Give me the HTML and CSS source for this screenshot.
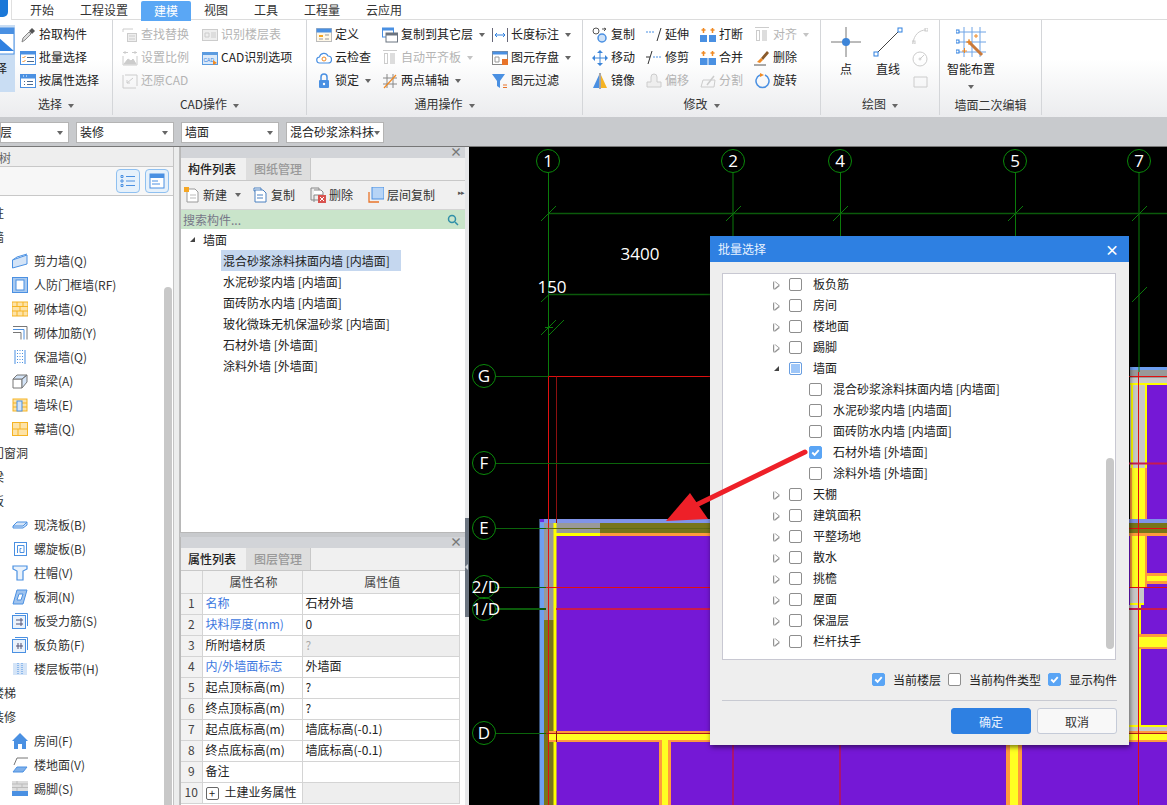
FILE: index.html
```html
<!DOCTYPE html>
<html lang="zh-CN">
<head>
<meta charset="utf-8">
<title>批量选择</title>
<link rel="stylesheet" href="styles.css">
</head>
<body>
<svg class="defs" aria-hidden="true">
  <symbol id="i-pick" viewBox="0 0 16 16"><path d="M2 15l1-4 6-6 2 2-6 6z" fill="#ddd" stroke="#888"/><path d="M9 4l3-3 3 3-3 3z" fill="#555"/></symbol>
  <symbol id="i-batch" viewBox="0 0 16 16"><rect x=".5" y="1.5" width="15" height="13" fill="#fff" stroke="#4a90e2"/><rect x=".5" y="1.5" width="15" height="3" fill="#4a90e2"/><path d="M2.500 7l1 1 2-2M2.500 11l1 1 2-2" fill="none" stroke="#f08a24"/><path d="M7 7.500h7M7 11.500h7" stroke="#4a6a90"/></symbol>
  <symbol id="i-attr" viewBox="0 0 16 16"><rect x=".5" y="1.500" width="15" height="13" fill="#fff" stroke="#4a90e2"/><rect x=".5" y="1.500" width="15" height="4" fill="#4a90e2"/><path d="M3 3h1M6 3h1" stroke="#fff"/><path d="M4 8.500h1M4 11.500h1M7 8.500h6M7 11.500h6" stroke="#4a6a90"/></symbol>
  <symbol id="i-find" viewBox="0 0 16 16" fill="none" stroke="#ccc"><path d="M1 2h10M1 2v3"/><rect x="5.500" y="6.500" width="9" height="8" fill="#eee"/><path d="M7 9h6M7 12h6"/></symbol>
  <symbol id="i-floor" viewBox="0 0 16 16" fill="none" stroke="#ccc"><rect x=".5" y="2.500" width="15" height="11" fill="#eee"/><path d="M3 6h4v4H3zM9 6h5M9 8h5M9 10h5"/></symbol>
  <symbol id="i-scale" viewBox="0 0 16 16" fill="none" stroke="#ccc"><path d="M1 6v9h14V6"/><path d="M2 14l4-5 3 2 2-2 3 5z" fill="#ccc"/><path d="M3 1v3M13 1v3M1 2.500h5M10 2.500h5"/></symbol>
  <symbol id="i-cadopt" viewBox="0 0 16 16"><rect x=".5" y="2.500" width="15" height="12" fill="#dbe9f8" stroke="#5b9be0"/><rect x="1" y="3" width="14" height="2" fill="#5b9be0"/><text x="1.500" y="11.500" class="tiny">CAD</text><path d="M11 10l4 3-4 2z" fill="#f08a24"/></symbol>
  <symbol id="i-restore" viewBox="0 0 16 16" fill="none" stroke="#ccc"><path d="M1 2v13h13M3 2h12v11"/><path d="M11 5L5 10M5 7v3h3"/></symbol>
  <symbol id="i-def" viewBox="0 0 16 16"><rect x=".5" y="1.500" width="15" height="13" fill="#fff8e8" stroke="#bbb"/><rect x=".5" y="1.500" width="15" height="4" fill="#4a90e2"/><path d="M3 8h4v2H3z" fill="#f5a623"/><path d="M9 8h4M3 12h4M9 12h4" stroke="#999"/></symbol>
  <symbol id="i-cloud" viewBox="0 0 16 16"><path d="M4 13a3 3 0 0 1-.5-6 4.500 4.500 0 0 1 8.500-1 3.500 3.500 0 0 1 0 7z" fill="#fff" stroke="#4a90e2" stroke-width="1.200"/><circle cx="8" cy="9" r="2" fill="none" stroke="#f08a24"/></symbol>
  <symbol id="i-lock" viewBox="0 0 16 16"><path d="M5 7V4a3 3 0 0 1 6 0v3" fill="none" stroke="#4a90e2" stroke-width="1.500"/><rect x="3" y="7" width="10" height="8" rx="1" fill="#4a90e2"/><circle cx="8" cy="11" r="1.200" fill="#fff"/></symbol>
  <symbol id="i-copyf" viewBox="0 0 16 16"><rect x=".5" y="1" width="11" height="9" fill="#fff" stroke="#4a90e2"/><rect x=".5" y="1" width="11" height="2.500" fill="#4a90e2"/><rect x="4" y="6" width="11.500" height="9" fill="#fff" stroke="#6b7480"/><rect x="4" y="6" width="11.500" height="2.500" fill="#6b7480"/></symbol>
  <symbol id="i-align" viewBox="0 0 16 16"><path d="M1 .5h14" stroke="#ccc"/><rect x="2.500" y="3.500" width="3" height="10" fill="none" stroke="#ccc"/><rect x="8" y="3" width="5" height="11" fill="#ddd"/></symbol>
  <symbol id="i-axis" viewBox="0 0 16 16" fill="none"><path d="M1 5h14M1 11h14M5 1v14M11 1v14" stroke="#888"/><path d="M2 15L14 2" stroke="#f08a24" stroke-width="1.200"/></symbol>
  <symbol id="i-dim" viewBox="0 0 16 16" fill="none" stroke="#667"><path d="M.5 1v14M15.500 1v14"/><path d="M3 8h10" stroke="#2f80e0"/><path d="M5 6L3 8l2 2M11 6l2 2-2 2" stroke="#2f80e0"/></symbol>
  <symbol id="i-save" viewBox="0 0 16 16"><rect x=".5" y="1.500" width="15" height="13" fill="#fff" stroke="#888"/><rect x=".5" y="1.500" width="15" height="3" fill="#4a90e2"/><path d="M3 7h4v5H3z" fill="none" stroke="#999"/><rect x="10" y="9" width="6" height="6" fill="#e8742a"/></symbol>
  <symbol id="i-filter" viewBox="0 0 16 16"><path d="M0 1h13L8 8v7L5 13V8z" fill="#4a90e2"/><path d="M11 12h4M11 14.500h4" stroke="#e8742a"/></symbol>
  <symbol id="i-copy" viewBox="0 0 16 16" fill="none"><circle cx="4" cy="4" r="3" stroke="#555"/><circle cx="10" cy="11" r="4" stroke="#4a90e2" stroke-width="1.500" fill="#cfe2f8"/><path d="M10 2h4M12 1l2 1-2 2" stroke="#555"/></symbol>
  <symbol id="i-move" viewBox="0 0 16 16" fill="#3d85d8"><path d="M8 0l3 3H5zM8 16l-3-3h6zM0 8l3-3v6zM16 8l-3 3V5z"/><path d="M8 3v10M3 8h10" stroke="#3d85d8"/></symbol>
  <symbol id="i-mirror" viewBox="0 0 16 16"><path d="M7 2L1 15h6z" fill="#4a90e2"/><path d="M9 2l6 13H9z" fill="#f5b323"/><path d="M8 0v16" stroke="#555"/></symbol>
  <symbol id="i-extend" viewBox="0 0 16 16" fill="none"><path d="M0 5h9" stroke="#4a90e2" stroke-dasharray="2 1"/><path d="M11 14l4-13" stroke="#333"/></symbol>
  <symbol id="i-trim" viewBox="0 0 16 16" fill="none"><path d="M0 7h4" stroke="#333"/><path d="M7 7h9" stroke="#4a90e2" stroke-dasharray="2 1"/><path d="M2 14L6 1" stroke="#333"/></symbol>
  <symbol id="i-offset" viewBox="0 0 16 16" fill="#eee" stroke="#ccc"><path d="M5 9V4a3 3 0 0 1 6 0v5h4v5H1V9z"/></symbol>
  <symbol id="i-break" viewBox="0 0 16 16"><rect x="0" y="8" width="7" height="7" fill="#4a90e2"/><rect x="9" y="8" width="7" height="7" fill="#4a90e2"/><path d="M3.500 1v5M1.500 3h4M12.500 1v5M10.500 3h4" stroke="#f08a24" stroke-width="1.500"/></symbol>
  <symbol id="i-merge" viewBox="0 0 16 16"><rect x="0" y="8" width="16" height="7" fill="#4a90e2"/><path d="M8 8v7" stroke="#fff"/><path d="M3.500 1v5M1.500 3h4M12.500 1v5M10.500 3h4" stroke="#f08a24" stroke-width="1.500"/></symbol>
  <symbol id="i-split" viewBox="0 0 16 16" fill="none" stroke="#ccc"><path d="M1 14h13l1-7H3z"/><path d="M7 12l7-9" stroke-width="1.500"/></symbol>
  <symbol id="i-brush" viewBox="0 0 16 16"><path d="M7 8l6-7 2 2-6 7z" fill="#8a5a2b"/><path d="M7 8l2 2-3 3-3-1z" fill="#f08a24"/><path d="M0 15h12" stroke="#555"/></symbol>
  <symbol id="i-rotate" viewBox="0 0 16 16" fill="none"><path d="M6 2a6.500 6.500 0 1 0 5 0" stroke="#4a90e2" stroke-width="1.500"/><path d="M6 0l4 2-4 2z" fill="#f08a24"/></symbol>
  <symbol id="w-shear" viewBox="0 0 16 16"><path d="M.5 7L15 2v9L.5 15z" fill="#d4e4f7" stroke="#4a90e2"/><path d="M.5 7L5 4l10-3" fill="none" stroke="#4a90e2"/></symbol>
  <symbol id="w-door" viewBox="0 0 16 16"><rect x=".5" y=".5" width="15" height="15" fill="#a9caf0" stroke="#4a90e2"/><rect x="4" y="3" width="8" height="10" fill="#fff" stroke="#4a90e2"/></symbol>
  <symbol id="w-brick" viewBox="0 0 16 16"><rect width="16" height="14" y="1" fill="#fde3a8" stroke="#f5b323"/><path d="M0 5.500h16M0 10h16M5 1v4.500M11 1v4.500M8 5.500V10M5 10v5M11 10v5" stroke="#f5b323"/></symbol>
  <symbol id="w-rebar" viewBox="0 0 16 16" fill="none" stroke="#777"><path d="M1 1.500h14v13"/><path d="M1 4.500h11v10" stroke="#4a90e2"/><path d="M1 7.500h8v7"/></symbol>
  <symbol id="w-ins" viewBox="0 0 16 16" fill="none"><path d="M3 1v14M13 1v14" stroke="#4a90e2"/><path d="M8 1v14M5.500 1v14M10.500 1v14" stroke="#4a90e2" stroke-dasharray="1 2"/></symbol>
  <symbol id="w-beam" viewBox="0 0 16 16"><path d="M1 6h9v9H1z" fill="#fff" stroke="#777"/><path d="M1 6l4-4h10l-5 4zM10 6l5-4v7l-5 6z" fill="#d4e4f7" stroke="#777"/></symbol>
  <symbol id="w-pier" viewBox="0 0 16 16"><rect y="2" width="14" height="12" x="1" fill="#fde3a8" stroke="#f5b323"/><path d="M1 6h14M1 10h14" stroke="#f5b323"/><rect x="5" y="4" width="5" height="10" fill="#d4e4f7" stroke="#4a90e2"/></symbol>
  <symbol id="w-curtain" viewBox="0 0 16 16"><rect x=".5" y="1.500" width="15" height="13" fill="#fde3a8" stroke="#f5b323"/><path d="M0 8h16M8 1v7M6 8v7" stroke="#f5b323"/></symbol>
  <symbol id="w-slab" viewBox="0 0 16 16"><path d="M1 9l4-4h10v3l-4 3H1z" fill="#d4e4f7" stroke="#4a90e2"/><path d="M1 9h10l4-4" fill="none" stroke="#4a90e2"/></symbol>
  <symbol id="w-spiral" viewBox="0 0 16 16" fill="none" stroke="#4a90e2"><rect x="2.500" y="1.500" width="12" height="13"/><path d="M5.500 12V4.500h6.500v7H8V7.500h1.500"/></symbol>
  <symbol id="w-cap" viewBox="0 0 16 16" fill="none" stroke="#4a90e2" stroke-width="1.200"><path d="M1 1h14v3l-4 2v9H5V6L1 4z" fill="#eaf2fb"/></symbol>
  <symbol id="w-hole" viewBox="0 0 16 16"><path d="M1 15L5 1h10l-4 14z" fill="#9fc3ee" stroke="#4a90e2"/><path d="M5 11l2-6h4l-2 6z" fill="#fff" stroke="#4a90e2"/></symbol>
  <symbol id="w-rb" viewBox="0 0 16 16" fill="none" stroke="#4a90e2"><rect x=".5" y="2.500" width="13" height="13" fill="#eaf2fb"/><path d="M3 .5h12.500V13"/><path d="M4 7h7M4 11h7M9 5v8" stroke="#557"/></symbol>
  <symbol id="w-rn" viewBox="0 0 16 16" fill="none" stroke="#4a90e2"><rect x=".5" y="2.500" width="13" height="13" fill="#eaf2fb"/><path d="M3 .5h12.500V13"/><path d="M4 9h7M6 6v6M9 6v6" stroke="#557"/></symbol>
  <symbol id="w-band" viewBox="0 0 16 16"><rect x="1" y="2" width="14" height="12" fill="#d4e4f7"/><path d="M6 2v12M10 2v12" stroke="#4a90e2" stroke-dasharray="1 1"/></symbol>
  <symbol id="w-room" viewBox="0 0 16 16"><path d="M8 0L0 8h2v8h4v-5h4v5h4V8h2z" fill="#4a90e2"/></symbol>
  <symbol id="w-floor" viewBox="0 0 16 16"><path d="M1 15l4-5h10l-4 5z" fill="#7fb0ea" stroke="#4a90e2"/><path d="M2 8L5 1h11" fill="none" stroke="#777"/></symbol>
  <symbol id="w-skirt" viewBox="0 0 16 16"><rect width="16" height="10" fill="#ddd"/><path d="M0 3h16M0 6.500h16M5 0v3M10 3v3.500M5 6.500V10" stroke="#bbb"/><rect y="10" width="16" height="5" fill="#4a90e2"/></symbol>
  <symbol id="t-list" viewBox="0 0 16 16" fill="none" stroke="#4a90e2"><path d="M1 2.500h2v2H1zM1 7h2v2H1zM1 11.500h2v2H1zM6 3.500h9M6 8h9M6 12.500h9"/></symbol>
  <symbol id="t-form" viewBox="0 0 16 16"><rect x="1" y="1" width="14" height="14" fill="#fff" stroke="#4a90e2"/><rect x="1" y="1" width="14" height="4" fill="#4a90e2"/><path d="M3 8h6M3 11h8" stroke="#4a90e2"/></symbol>
  <symbol id="m-new" viewBox="0 0 16 16"><path d="M3 2h8l3 3v10H3z" fill="#fff" stroke="#999"/><rect x="0" y="0" width="5" height="5" fill="#f5a623"/><path d="M6 8h6M6 11h6" stroke="#bbb"/></symbol>
  <symbol id="m-copy" viewBox="0 0 16 16" fill="#fff" stroke="#4a80c0"><path d="M2 1h7v3H2z"/><path d="M3 3h8l3 3v9H3z"/><path d="M5 8h6M5 11h6"/></symbol>
  <symbol id="m-del" viewBox="0 0 16 16"><path d="M1 1h8v12H1z" fill="#eee" stroke="#888"/><path d="M4 3h7l2 2v3H4v7" fill="#fff" stroke="#888"/><rect x="8" y="8" width="8" height="8" fill="#d9534f"/><path d="M10 10l4 4M14 10l-4 4" stroke="#fff"/></symbol>
  <symbol id="m-floor" viewBox="0 0 16 16"><path d="M1 5v10h10" fill="none" stroke="#e8742a" stroke-width="1.300"/><rect x="4" y="0" width="12" height="12" fill="#b6d4f6" stroke="#4a90e2"/></symbol>
  <symbol id="m-search" viewBox="0 0 12 12" fill="none" stroke="#2f8fa8" stroke-width="1.500"><circle cx="5" cy="5" r="3.500"/><path d="M8 8l3 3"/></symbol>
  <symbol id="c-check" viewBox="0 0 14 14"><path d="M3.500 7l2.500 2.500L10.500 4.500" fill="none" stroke="#fff" stroke-width="2"/></symbol>
</svg>

<header class="tabbar">
  <div class="logo"></div>
  <nav class="tabs">
    <span class="tab t30">开始</span>
    <span class="tab t80">工程设置</span>
    <span class="tab active">建模</span>
    <span class="tab t204">视图</span>
    <span class="tab t254">工具</span>
    <span class="tab t304">工程量</span>
    <span class="tab t366">云应用</span>
  </nav>
</header>

<section class="ribbon">
  <div class="group g1">
    <div class="group-body">
      <div class="bigsel"><svg class="bigsel-icon" viewBox="0 0 15 30"><rect x="-10" y="1" width="24" height="26" fill="#fff" stroke="#4a90e2"/><rect x="-10" y="1" width="24" height="6" fill="#4a90e2"/><path d="M-2 10L14 24H-2z" fill="#2f80e0"/></svg><span class="bigsel-t">择</span></div>
      <div class="col c1">
        <div class="it"><svg><use href="#i-pick"/></svg>拾取构件</div>
        <div class="it"><svg><use href="#i-batch"/></svg>批量选择</div>
        <div class="it"><svg><use href="#i-attr"/></svg>按属性选择</div>
      </div>
    </div>
    <div class="glabel">选择<i class="caret"></i></div>
  </div>
  <div class="group g2">
    <div class="group-body">
      <div class="col w80">
        <div class="it off"><svg><use href="#i-find"/></svg>查找替换</div>
        <div class="it off"><svg><use href="#i-scale"/></svg>设置比例</div>
        <div class="it off"><svg><use href="#i-restore"/></svg>还原CAD</div>
      </div>
      <div class="col">
        <div class="it off"><svg><use href="#i-floor"/></svg>识别楼层表</div>
        <div class="it"><svg><use href="#i-cadopt"/></svg>CAD识别选项</div>
      </div>
    </div>
    <div class="glabel">CAD操作<i class="caret"></i></div>
  </div>
  <div class="group g3">
    <div class="group-body">
      <div class="col w66">
        <div class="it"><svg><use href="#i-def"/></svg>定义</div>
        <div class="it"><svg><use href="#i-cloud"/></svg>云检查</div>
        <div class="it"><svg><use href="#i-lock"/></svg>锁定<i class="caret"></i></div>
      </div>
      <div class="col w110">
        <div class="it"><svg><use href="#i-copyf"/></svg>复制到其它层<i class="caret"></i></div>
        <div class="it off"><svg><use href="#i-align"/></svg>自动平齐板<i class="caret lite"></i></div>
        <div class="it"><svg><use href="#i-axis"/></svg>两点辅轴<i class="caret"></i></div>
      </div>
      <div class="col">
        <div class="it"><svg><use href="#i-dim"/></svg>长度标注<i class="caret"></i></div>
        <div class="it"><svg><use href="#i-save"/></svg>图元存盘<i class="caret"></i></div>
        <div class="it"><svg><use href="#i-filter"/></svg>图元过滤</div>
      </div>
    </div>
    <div class="glabel">通用操作<i class="caret"></i></div>
  </div>
  <div class="group g4">
    <div class="group-body">
      <div class="col w54">
        <div class="it"><svg><use href="#i-copy"/></svg>复制</div>
        <div class="it"><svg><use href="#i-move"/></svg>移动</div>
        <div class="it"><svg><use href="#i-mirror"/></svg>镜像</div>
      </div>
      <div class="col w54">
        <div class="it"><svg><use href="#i-extend"/></svg>延伸</div>
        <div class="it"><svg><use href="#i-trim"/></svg>修剪</div>
        <div class="it off"><svg><use href="#i-offset"/></svg>偏移</div>
      </div>
      <div class="col w54">
        <div class="it"><svg><use href="#i-break"/></svg>打断</div>
        <div class="it"><svg><use href="#i-merge"/></svg>合并</div>
        <div class="it off"><svg><use href="#i-split"/></svg>分割</div>
      </div>
      <div class="col">
        <div class="it off"><svg><use href="#i-align"/></svg>对齐<i class="caret lite"></i></div>
        <div class="it"><svg><use href="#i-brush"/></svg>删除</div>
        <div class="it"><svg><use href="#i-rotate"/></svg>旋转</div>
      </div>
    </div>
    <div class="glabel">修改<i class="caret"></i></div>
  </div>
  <div class="group g5">
    <div class="group-body">
      <div class="big w-pt">
        <svg class="big-i" viewBox="0 0 30 30"><path d="M0 15h30M15 0v30" stroke="#777"/><circle cx="15" cy="15" r="4" fill="#3d85d8"/></svg>
        <span>点</span>
      </div>
      <div class="big w-ln">
        <svg class="big-i" viewBox="0 0 30 30"><path d="M3 27L27 3" stroke="#444"/><rect x="1" y="25" width="4" height="4" fill="#fff" stroke="#2f80e0"/><rect x="25" y="1" width="4" height="4" fill="#fff" stroke="#2f80e0"/></svg>
        <span>直线</span>
      </div>
      <div class="mini">
        <svg viewBox="0 0 16 16" fill="none" stroke="#ccc"><path d="M1 15C2 7 7 2 14 2"/><rect x="13" y="0" width="3" height="3"/><rect x="0" y="13" width="3" height="3"/></svg>
        <svg viewBox="0 0 16 16" fill="none" stroke="#ccc"><circle cx="8" cy="8" r="7"/><path d="M8 8l4-4"/><circle cx="8" cy="8" r="1"/></svg>
        <svg viewBox="0 0 16 16" fill="none" stroke="#ccc"><path d="M2 3h13v10H2z"/></svg>
      </div>
    </div>
    <div class="glabel">绘图<i class="caret"></i></div>
  </div>
  <div class="group g6">
    <div class="group-body">
      <div class="big w-sm">
        <svg class="big-i" viewBox="0 0 30 30" fill="none"><path d="M0 5h30M0 15h30M0 25h30M8 0v30M16 0v30M24 0v30" stroke="#6ea4e6"/><rect x="0" y="3" width="3" height="3" fill="#fff" stroke="#2f80e0"/><rect x="0" y="13" width="3" height="3" fill="#fff" stroke="#2f80e0"/><rect x="0" y="23" width="3" height="3" fill="#fff" stroke="#2f80e0"/><path d="M12 14l14 14" stroke="#c9793a" stroke-width="3"/><path d="M10 15h6M13 12v6M18 9h4M20 7v4M6 24h5M8.500 21v5" stroke="#f08a24"/></svg>
        <span>智能布置</span>
        <i class="caret solo"></i>
      </div>
    </div>
    <div class="glabel g6l">墙面二次编辑</div>
  </div>
</section>

<section class="selbar">
  <div class="sel s0"><span class="clip0">楼层</span><i class="caret"></i></div>
  <div class="sel"><span>装修</span><i class="caret"></i></div>
  <div class="sel"><span>墙面</span><i class="caret"></i></div>
  <div class="sel"><span>混合砂浆涂料抹</span><i class="caret"></i></div>
</section>

<main class="main">
  <aside class="navpanel">
    <div class="navhead"><span class="clip8">导航树</span></div>
    <div class="navtools">
      <span class="tbtn"><svg><use href="#t-list"/></svg></span>
      <span class="tbtn"><svg><use href="#t-form"/></svg></span>
    </div>
    <div class="navtree">
      <div class="scroll-nav"></div>
      <div class="n top">柱</div>
      <div class="n top">墙</div>
      <div class="n"><svg><use href="#w-shear"/></svg>剪力墙(Q)</div>
      <div class="n"><svg><use href="#w-door"/></svg>人防门框墙(RF)</div>
      <div class="n"><svg><use href="#w-brick"/></svg>砌体墙(Q)</div>
      <div class="n"><svg><use href="#w-rebar"/></svg>砌体加筋(Y)</div>
      <div class="n"><svg><use href="#w-ins"/></svg>保温墙(Q)</div>
      <div class="n"><svg><use href="#w-beam"/></svg>暗梁(A)</div>
      <div class="n"><svg><use href="#w-pier"/></svg>墙垛(E)</div>
      <div class="n"><svg><use href="#w-curtain"/></svg>幕墙(Q)</div>
      <div class="n top">门窗洞</div>
      <div class="n top">梁</div>
      <div class="n top">板</div>
      <div class="n"><svg><use href="#w-slab"/></svg>现浇板(B)</div>
      <div class="n"><svg><use href="#w-spiral"/></svg>螺旋板(B)</div>
      <div class="n"><svg><use href="#w-cap"/></svg>柱帽(V)</div>
      <div class="n"><svg><use href="#w-hole"/></svg>板洞(N)</div>
      <div class="n"><svg><use href="#w-rb"/></svg>板受力筋(S)</div>
      <div class="n"><svg><use href="#w-rn"/></svg>板负筋(F)</div>
      <div class="n"><svg><use href="#w-band"/></svg>楼层板带(H)</div>
      <div class="n top">楼梯</div>
      <div class="n top">装修</div>
      <div class="n"><svg><use href="#w-room"/></svg>房间(F)</div>
      <div class="n"><svg><use href="#w-floor"/></svg>楼地面(V)</div>
      <div class="n"><svg><use href="#w-skirt"/></svg>踢脚(S)</div>
    </div>
  </aside>

  <div class="midcol">
    <section class="pane pane-top">
      <div class="panehead">×</div>
      <div class="panetabs"><span class="ptab on">构件列表</span><span class="ptab">图纸管理</span></div>
      <div class="ptools">
        <span class="pt w-new"><svg><use href="#m-new"/></svg>新建<i class="caret"></i></span>
        <span class="pt w-cp"><svg><use href="#m-copy"/></svg>复制</span>
        <span class="pt w-dl"><svg><use href="#m-del"/></svg>删除</span>
        <span class="pt"><svg><use href="#m-floor"/></svg>层间复制</span>
        <span class="more">▸▸</span>
      </div>
      <div class="psearch"><span>搜索构件...</span><svg><use href="#m-search"/></svg></div>
      <div class="plist">
        <div class="li-root"><i class="tri-open"></i>墙面</div>
        <div class="li sel-li">混合砂浆涂料抹面内墙 [内墙面]</div>
        <div class="li">水泥砂浆内墙 [内墙面]</div>
        <div class="li">面砖防水内墙 [内墙面]</div>
        <div class="li">玻化微珠无机保温砂浆 [内墙面]</div>
        <div class="li">石材外墙 [外墙面]</div>
        <div class="li">涂料外墙 [外墙面]</div>
      </div>
    </section>
    <section class="pane pane-bot">
      <div class="panehead">×</div>
      <div class="panetabs"><span class="ptab on">属性列表</span><span class="ptab">图层管理</span></div>
      <table class="props">
        <thead><tr><th class="cn"></th><th class="ck">属性名称</th><th class="cv">属性值</th></tr></thead>
        <tbody>
          <tr><td class="cn">1</td><td class="blue">名称</td><td>石材外墙</td></tr>
          <tr><td class="cn">2</td><td class="blue">块料厚度(mm)</td><td>0</td></tr>
          <tr><td class="cn">3</td><td>所附墙材质</td><td class="gray q">?</td></tr>
          <tr><td class="cn">4</td><td class="blue">内/外墙面标志</td><td>外墙面</td></tr>
          <tr><td class="cn">5</td><td>起点顶标高(m)</td><td>?</td></tr>
          <tr><td class="cn">6</td><td>终点顶标高(m)</td><td>?</td></tr>
          <tr><td class="cn">7</td><td>起点底标高(m)</td><td>墙底标高(-0.1)</td></tr>
          <tr><td class="cn">8</td><td>终点底标高(m)</td><td>墙底标高(-0.1)</td></tr>
          <tr><td class="cn">9</td><td>备注</td><td></td></tr>
          <tr><td class="cn">10</td><td><i class="plus">+</i>土建业务属性</td><td class="gray"></td></tr>
        </tbody>
      </table>
    </section>
  </div>

  <div class="splitter"><div class="handle"></div></div>

  <div class="canvas">
    <svg class="cad" viewBox="469 147 698 658">
      <rect x="469" y="147" width="698" height="658" fill="#000"/>
      <rect x="556" y="536" width="611" height="269" fill="#7518d6"/>
      <rect x="1130" y="370" width="37" height="8" fill="#999"/>
      <rect x="1130" y="378" width="17" height="90" fill="#c8c8c8"/>
      <path d="M1132 378v90M1146 378v90" stroke="#ff0" stroke-width="2"/>
      <rect x="1130" y="378" width="37" height="5" fill="#c8c8c8"/>
      <rect x="1130" y="383" width="37" height="2" fill="#ff0"/>
      <rect x="1147" y="385" width="20" height="190" fill="#7518d6"/>
      <rect x="1130" y="468" width="17" height="119" fill="#ff9a3c"/>
      <rect x="1132" y="468" width="13" height="119" fill="#ff2"/>
      <rect x="1147" y="573" width="20" height="11" fill="#ff9a3c"/>
      <rect x="1147" y="576" width="20" height="5" fill="#ff2"/>
      <rect x="1130" y="587" width="14" height="18" fill="#c8c8c8"/>
      <rect x="1130" y="603" width="14" height="2" fill="#ff0"/>
      <rect x="1129" y="605" width="10" height="120" fill="#c8c8c8"/>
      <rect x="1139" y="605" width="2" height="120" fill="#ff0"/>
      <rect x="1139" y="634" width="28" height="15" fill="#ff9a3c"/>
      <rect x="1139" y="637" width="28" height="10" fill="#ff2"/>
      <rect x="1129" y="725" width="38" height="16" fill="#c8c8c8"/>
      <rect x="1129" y="725" width="38" height="2" fill="#ff0"/>
      <rect x="1129" y="739" width="38" height="2" fill="#ff0"/>
      <rect x="1130" y="367" width="37" height="3" fill="#6e9ff0"/>
      <rect x="548" y="523" width="52" height="10" fill="#999"/>
      <rect x="600" y="523" width="567" height="10" fill="#77751a"/>
      <rect x="548" y="533" width="52" height="3" fill="#ff0"/>
      <rect x="600" y="533" width="567" height="3" fill="#ff9a3c"/>
      <rect x="544" y="523" width="10" height="97" fill="#999"/>
      <rect x="544" y="620" width="10" height="185" fill="#77751a"/>
      <rect x="553.500" y="523" width="3" height="282" fill="#ff0"/>
      <rect x="539.500" y="519" width="4.500" height="286" fill="#6e9ff0"/>
      <rect x="540" y="519" width="627" height="4" fill="#8094e8"/>
      <rect x="540" y="519" width="4" height="3" fill="#6a2ae0"/>
      <rect x="548" y="731" width="619" height="11" fill="#ff9a3c"/>
      <rect x="548" y="733" width="619" height="7" fill="#ff2"/>
      <rect x="659" y="742" width="12" height="63" fill="#ff9a3c"/>
      <rect x="662" y="737" width="6" height="68" fill="#ff2"/>
      <rect x="1006" y="742" width="16" height="63" fill="#ff9a3c"/>
      <rect x="1010" y="737" width="8" height="68" fill="#ff2"/>
      <g stroke="#e01010" fill="none">
        <path d="M548.500 376.500H1167M548.500 376.500V805"/>
        <path d="M733 742V805M840 742V805M1138.500 372V805"/>
        <path d="M1129 528.500H1167M540 587.500H1167"/>
        <path d="M544 733.500H1167" stroke="#b01818"/>
        <path d="M556.500 376.500V523M556.500 731V742" stroke="#8c1010"/>
        <path d="M556 609H1167M1129 463.500H1167" stroke="#c81a50" stroke-width="2"/>
      </g>
      <path d="M544 528.500H710" stroke="#5f6a12"/>
      <g stroke="#0a7a0a" fill="none">
        <path d="M548.500 173V376M733 173V236M840.500 173V236M1015.500 173V236M1139 173V372"/>
        <path d="M496 376.500H548M496 463.500H710M496 528.500H546M496 587.500H546M496 733.500H546" stroke="#0b640b"/>
        <path d="M548 213.500H1167M548 294.500H710" stroke="#0b5a0b" stroke-width="1.500"/>
        <path d="M496 609H546" stroke="#0b5a0b" stroke-width="2"/>
        <path d="M541 221L556 206M541 302L549 294.500M541 335L556 320M549 335L564 320M545 327.500H553"/>
        <path d="M726 221L741 206M833 221L848 206M1008 221L1023 206M1132 221L1147 206M1132 302L1147 287"/>
        <g stroke="#0a8a0a">
          <circle cx="548" cy="161" r="11.500"/><circle cx="733" cy="161" r="11.500"/><circle cx="840" cy="161" r="11.500"/><circle cx="1015" cy="161" r="11.500"/><circle cx="1139" cy="161" r="11.500"/>
          <circle cx="484" cy="376" r="11.500"/><circle cx="484" cy="463" r="11.500"/><circle cx="484" cy="528" r="11.500"/><circle cx="484" cy="587" r="11.500"/><circle cx="484" cy="609" r="11.500"/><circle cx="484" cy="733" r="11.500"/>
        </g>
      </g>
      <g class="cadt">
        <text x="548" y="167">1</text><text x="733" y="167">2</text><text x="840" y="167">4</text><text x="1015" y="167">5</text><text x="1139" y="167">7</text>
        <text x="484" y="382">G</text><text x="484" y="469">F</text><text x="484" y="534">E</text><text x="486" y="593">2/D</text><text x="486" y="615">1/D</text><text x="484" y="739">D</text>
        <text x="640" y="260">3400</text><text x="552" y="293">150</text>
      </g>
    </svg>

    <div class="dialog">
      <div class="dtitle"><span>批量选择</span><b class="dclose">×</b></div>
      <div class="dtree">
        <div class="dscroll"></div>
        <div class="r p"><i class="tri"></i><i class="cb"></i>板负筋</div>
        <div class="r p"><i class="tri"></i><i class="cb"></i>房间</div>
        <div class="r p"><i class="tri"></i><i class="cb"></i>楼地面</div>
        <div class="r p"><i class="tri"></i><i class="cb"></i>踢脚</div>
        <div class="r p"><i class="tri-down"></i><i class="cb part"></i>墙面</div>
        <div class="r c"><i class="cb"></i>混合砂浆涂料抹面内墙 [内墙面]</div>
        <div class="r c"><i class="cb"></i>水泥砂浆内墙 [内墙面]</div>
        <div class="r c"><i class="cb"></i>面砖防水内墙 [内墙面]</div>
        <div class="r c"><i class="cb on"><svg><use href="#c-check"/></svg></i>石材外墙 [外墙面]</div>
        <div class="r c"><i class="cb"></i>涂料外墙 [外墙面]</div>
        <div class="r p"><i class="tri"></i><i class="cb"></i>天棚</div>
        <div class="r p"><i class="tri"></i><i class="cb"></i>建筑面积</div>
        <div class="r p"><i class="tri"></i><i class="cb"></i>平整场地</div>
        <div class="r p"><i class="tri"></i><i class="cb"></i>散水</div>
        <div class="r p"><i class="tri"></i><i class="cb"></i>挑檐</div>
        <div class="r p"><i class="tri"></i><i class="cb"></i>屋面</div>
        <div class="r p"><i class="tri"></i><i class="cb"></i>保温层</div>
        <div class="r p"><i class="tri"></i><i class="cb"></i>栏杆扶手</div>
      </div>
      <div class="dopts">
        <span class="opt"><i class="cb on"><svg><use href="#c-check"/></svg></i>当前楼层</span>
        <span class="opt"><i class="cb"></i>当前构件类型</span>
        <span class="opt"><i class="cb on"><svg><use href="#c-check"/></svg></i>显示构件</span>
      </div>
      <div class="dbtns">
        <button class="btn primary" type="button">确定</button>
        <button class="btn" type="button">取消</button>
      </div>
    </div>

    <svg class="arrow" viewBox="469 147 698 658">
      <path d="M805 452L690 508" stroke="#ee2028" stroke-width="5" stroke-linecap="round"/>
      <path d="M666 521L690 493L708 519z" fill="#ee2028"/>
    </svg>
  </div>
</main>
</body>
</html>
```

FILE: styles.css
```css
* { box-sizing: border-box; }
html, body { margin: 0; padding: 0; width: 1167px; height: 805px; overflow: hidden; }
body { font: 12px/1.2 "Noto Sans CJK SC", "Liberation Sans", sans-serif; color: #222; background: #fff; }
.defs { position: absolute; width: 0; height: 0; overflow: hidden; }
.tiny { font: 5px "Liberation Sans", sans-serif; fill: #2f80e0; }
i { font-style: normal; }

/* tab bar */
.tabbar { height: 20px; background: #fff; border-bottom: 1px solid #dcdcdc; display: flex; }
.logo { width: 12px; height: 20px; background: #fff; border-right: 1px solid #e0e0e0; position: relative; overflow: hidden; }
.logo::before { content: ""; display: block; width: 10px; height: 17px; border-radius: 0 0 5px 0; background: #1b78d8; margin-left: -2px; }
.tabs { display: flex; flex: 1; }
.tab { height: 20px; line-height: 19px; color: #333; font-size: 12px; }
.t30 { margin-left: 18px; }
.t80 { margin-left: 26px; }
.active { margin-left: 13px; width: 50px; text-align: center; color: #fff; background: #5aa7f5; border-radius: 2px 2px 0 0; margin-top: 1px; }
.t204 { margin-left: 13px; }
.t254, .t304 { margin-left: 26px; }
.t366 { margin-left: 26px; }

/* ribbon */
.ribbon { height: 97px; display: flex; background: linear-gradient(#fff 40%, #ebecee); }
.group { display: flex; flex-direction: column; border-right: 1px solid #d4d6d9; margin-bottom: 2px; flex: none; }
.group-body { height: 72px; display: flex; padding-top: 3px; }
.glabel { height: 23px; line-height: 23px; text-align: center; color: #333; }
.g1 { width: 113px; }
.g2 { width: 194px; }
.g3 { width: 276px; }
.g4 { width: 238px; }
.g5 { width: 119px; }
.g6 { width: 102px; }
.g2 .group-body { padding-left: 9px; }
.g3 .group-body { padding-left: 9px; }
.g4 .group-body { padding-left: 9px; }
.col { display: flex; flex-direction: column; flex: none; }
.w80 { width: 80px; }
.w66 { width: 66px; }
.w110 { width: 110px; }
.w54 { width: 54px; }
.it { height: 23px; display: flex; align-items: center; white-space: nowrap; color: #222; }
.it svg { width: 16px; height: 16px; margin-right: 3px; flex: none; }
.it.off { color: #b4b4b4; }
.caret { display: inline-block; width: 0; height: 0; border: 3.5px solid transparent; border-top: 4px solid #666; border-bottom: 0; margin-left: 6px; vertical-align: middle; }
.caret.lite { border-top-color: #c4c4c4; }
.bigsel { width: 15px; height: 67px; margin: 2px 5px 0 0; background: #c9ddf3; flex: none; display: flex; flex-direction: column; overflow: hidden; }
.bigsel-icon { width: 15px; height: 30px; margin-top: 2px; flex: none; }
.bigsel-t { margin: 4px 0 0 -5px; white-space: nowrap; }
.big { display: flex; flex-direction: column; align-items: center; flex: none; }
.big-i { width: 30px; height: 30px; margin-top: 4px; flex: none; }
.big span { margin-top: 4px; height: 16px; line-height: 16px; white-space: nowrap; }
.w-pt { width: 30px; margin-left: 10px; }
.w-ln { width: 30px; margin-left: 12px; }
.mini { display: flex; flex-direction: column; margin-left: 9px; padding-top: 5px; gap: 7px; }
.mini svg { width: 16px; height: 16px; }
.w-sm { width: 50px; margin-left: 6px; }
.caret.solo { margin: 8px 0 0 0; }
.g6l { line-height: 25px; }

/* selector row */
.selbar { height: 30px; background: #c8cacd; border-bottom: 1px solid #777; display: flex; padding: 5px 0 0 0; gap: 7px; }
.sel { width: 98px; height: 21px; background: #fff; border: 1px solid #b4b4b4; display: flex; align-items: center; justify-content: space-between; padding: 0 5px 0 3px; white-space: nowrap; overflow: hidden; }
.s0 { width: 69px; }
.clip0 { margin-left: -16px; }
.sel .caret { margin-left: 0; flex: none; }

/* main */
.main { height: 658px; display: flex; background: #000; position: relative; }

.navpanel { width: 180px; height: 100%; background: #eceded; border-right: 1px solid #bdbdbd; padding-right: 5px; flex: none; display: flex; flex-direction: column; }
.navhead { height: 20px; padding-top: 2px; background: #eee; border-bottom: 1px solid #c8c8c8; border-right: 1px solid #c4c4c4; color: #666; line-height: 17px; overflow: hidden; white-space: nowrap; }
.clip8 { margin-left: -25px; display: inline-block; }
.navtools { height: 29px; background: #f7f7f7; border-bottom: 1px solid #c8c8c8; border-right: 1px solid #c4c4c4; display: flex; justify-content: flex-end; align-items: center; gap: 5px; padding-right: 4px; }
.tbtn { width: 24px; height: 24px; border: 1px solid #8fc0f0; border-radius: 4px; background: #e6f1fb; display: flex; align-items: center; justify-content: center; }
.tbtn svg { width: 16px; height: 16px; }
.navtree { flex: 1; background: #fff; border-right: 1px solid #c4c4c4; padding-top: 5px; position: relative; overflow: hidden; }
.scroll-nav { position: absolute; left: 164px; top: 91px; width: 8px; height: 540px; background: #c8c8c8; border-radius: 4px 4px 0 0; }
.n { height: 24px; display: flex; align-items: center; padding-left: 12px; white-space: nowrap; color: #333; }
.n svg { width: 16px; height: 16px; margin-right: 6px; flex: none; }
.n.top { padding-left: 0; margin-left: -8px; }

.midcol { width: 285px; height: 100%; flex: none; display: flex; flex-direction: column; gap: 4px; background: #c8cacd; }
.pane { background: #fff; border-left: 1px solid #b8b8b8; display: flex; flex-direction: column; overflow: hidden; }
.pane-top { height: 386px; border-bottom: 1px solid #b8b8b8; }
.pane-bot { flex: 1; }
.panehead { height: 11px; background: #d2d4d8; text-align: right; color: #777; font-size: 12px; line-height: 10px; padding-right: 3px; font-weight: 700; flex: none; }
.panetabs { height: 23px; background: #f0f0f0; display: flex; border-bottom: 1px solid #c8c8c8; flex: none; }
.ptab { width: 65px; line-height: 22px; text-align: center; color: #999; background: #dedede; border-right: 1px solid #c8c8c8; font-weight: 500; }
.ptab.on { color: #222; background: #f0f0f0; border-right: 0; padding-right: 3px; }
.ptools { height: 29px; background: #f0f0f0; display: flex; align-items: center; padding-left: 3px; border-bottom: 1px solid #d4d4d4; flex: none; position: relative; color: #333; }
.pt { display: flex; align-items: center; white-space: nowrap; }
.pt svg { width: 16px; height: 16px; margin-right: 3px; flex: none; }
.pt .caret { margin-left: 8px; }
.w-new { width: 68px; }
.w-cp { width: 58px; }
.w-dl { width: 58px; }
.more { position: absolute; right: 1px; top: 7px; font-size: 7px; color: #555; letter-spacing: -1px; }
.psearch { height: 19px; background: #c9e4ca; display: flex; align-items: center; justify-content: space-between; padding: 1px 6px 0 2px; color: #778; flex: none; }
.psearch svg { width: 12px; height: 12px; }
.plist { flex: 1; color: #222; }
.li-root { height: 21px; line-height: 21px; padding-left: 9px; display: flex; align-items: center; }
.tri-open { width: 0; height: 0; border-left: 5px solid transparent; border-bottom: 5px solid #444; margin-right: 8px; }
.li { height: 21px; line-height: 21px; padding: 0 2px; margin-left: 40px; white-space: nowrap; }
.sel-li { background: #c5d7ef; width: 180px; }

.props { width: 279px; border-collapse: collapse; table-layout: fixed; background: #fff; color: #222; }
.props th, .props td { height: 21px; border: 1px solid #d4d4d4; padding: 0 0 0 3px; font-weight: 400; text-align: left; white-space: nowrap; overflow: hidden; border-left: 0; border-top: 0; }
.props th { height: 22px; background: #f2f2f2; text-align: center; color: #444; }
.props .cn { width: 21px; background: #f2f2f2; text-align: center; padding: 0; color: #444; }
.props .ck { width: 100px; }
.props .blue { color: #3d78e0; }
.props .gray { background: #eee; }
.props .q { color: #aaa; }
.plus { display: inline-block; width: 13px; height: 13px; line-height: 11px; border: 1px solid #666; border-radius: 2px; text-align: center; margin-right: 6px; vertical-align: -1px; font-size: 11px; }

.splitter { width: 4px; flex: none; background: #e6e7e9; position: relative; }
.handle { position: absolute; left: 0; top: 371px; width: 4px; height: 99px; background: #6b7480; }
.handle::after { content: ""; position: absolute; left: 0; top: 46px; border: 3px solid transparent; border-right: 3px solid #d0d4d8; border-left: 0; }

/* canvas */
.canvas { flex: 1; position: relative; overflow: hidden; background: #000; }
.cad { display: block; width: 698px; height: 658px; }
.cadt text { fill: #fff; font: 17px "Open Sans", "Noto Sans", sans-serif; text-anchor: middle; }

.dialog { position: absolute; left: 241px; top: 89px; width: 419px; height: 509px; background: #eee; box-shadow: 1px 2px 5px rgba(0, 0, 0, .55); display: flex; flex-direction: column; }
.dtitle { height: 26px; background: #2e80e2; color: #e8f2ff; display: flex; align-items: center; justify-content: space-between; padding: 0 10px 0 8px; flex: none; }
.dclose { font-size: 14px; font-weight: 700; color: #fff; line-height: 20px; }
.dtree { margin: 11px 13px 0 12px; height: 387px; border: 1px solid #c8c8d2; background: #fff; position: relative; overflow: hidden; flex: none; }
.dscroll { position: absolute; left: 383px; top: 184px; width: 8px; height: 191px; background: #c8c8c8; border-radius: 4px; }
.r { height: 21px; display: flex; align-items: center; white-space: nowrap; color: #222; }
.r.p { padding-left: 51px; }
.r.c { padding-left: 86px; }
.r .cb { margin-right: 11px; }
.cb { width: 13px; height: 13px; border: 1px solid #8e8e8e; border-radius: 2px; background: #fff; display: inline-block; flex: none; position: relative; }
.cb.on { background: #5aa5f5; border-color: #5aa5f5; }
.cb.on svg { position: absolute; left: -1px; top: -1px; width: 13px; height: 13px; }
.cb.part { box-shadow: inset 0 0 0 1px #fff; background: #9ec6f8; border-color: #6a9ee0; }
.tri { width: 0; height: 0; border: 4px solid transparent; border-left: 5px solid #fff; border-right: 0; margin-right: 10px; flex: none; position: relative; filter: drop-shadow(1px 0 0 #888) drop-shadow(-1px 0 0 #888) drop-shadow(0 1px 0 #999); transform: scale(.92); }
.tri-down { width: 0; height: 0; border-left: 5px solid transparent; border-bottom: 5px solid #444; margin: 0 10px 0 0; flex: none; }
.dopts { display: flex; justify-content: flex-end; align-items: center; gap: 7px; height: 20px; margin: 10px 12px 0 0; white-space: nowrap; color: #222; }
.opt { display: flex; align-items: center; }
.opt .cb { margin-right: 8px; }
.dbtns { margin: 10px 12px 0; padding-top: 7px; border-top: 1px solid #c8cad2; display: flex; justify-content: flex-end; gap: 6px; }
.btn { width: 80px; height: 26px; font: 12px "Noto Sans CJK SC", sans-serif; border: 1px solid #c5cbd8; border-radius: 3px; background: #f8f8f8; color: #333; padding: 0; }
.primary { background: #2e80e2; border-color: #2e80e2; color: #e8f2ff; }
.arrow { position: absolute; left: 0; top: 0; width: 698px; height: 658px; pointer-events: none; }
```
